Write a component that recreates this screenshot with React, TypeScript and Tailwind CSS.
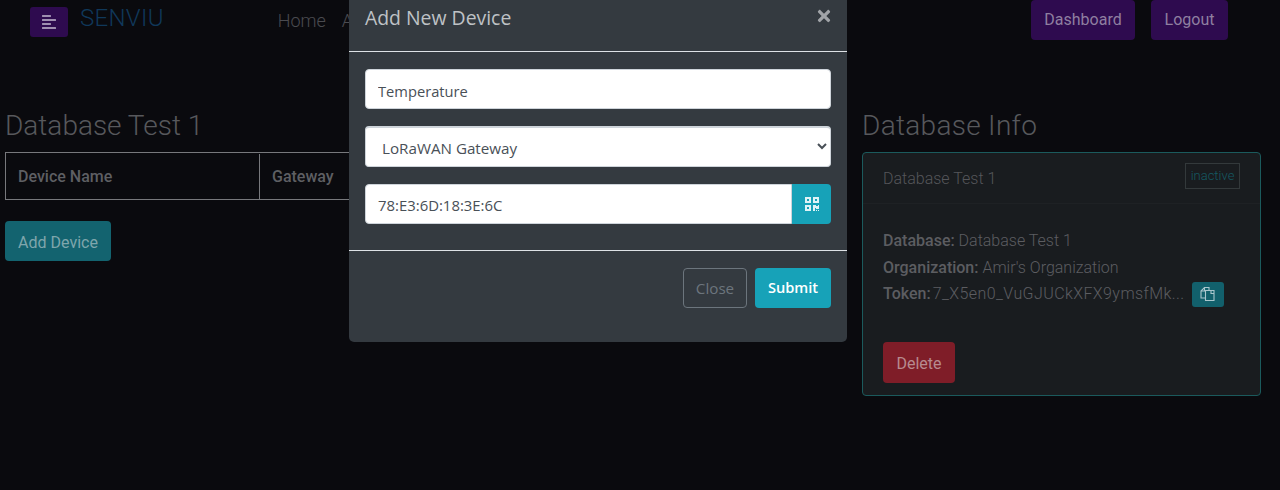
import React from "react";
import { FaAlignLeft, FaQrcode, FaTimes } from "react-icons/fa";

const rubik = "font-['Roboto',sans-serif]";
const segoe = "font-['Open_Sans','Noto_Sans',sans-serif]";

function CopyIcon() {
  return (
    <svg width="17" height="16" viewBox="0 0 16 16" fill="none" stroke="#a9c6cd" strokeWidth="1.1">
      <path d="M6 12H1.5V5L5 1.5H9.5V4.5" />
      <path d="M5 1.5V5H1.5" />
      <path d="M6 4.5H14.5V14.5H6Z" />
      <path d="M11.5 4.5V7.5H14.5" />
    </svg>
  );
}

export default function App() {
  return (
    <div className={`relative h-[490px] overflow-hidden bg-[#0a0a0e] ${rubik} font-light`}>
      <nav className="flex h-10 items-start">
        <button className="ml-[30px] mt-[7px] flex h-[30px] w-[38px] items-center justify-center rounded-[3px] bg-[#2e0b4f] text-[#9f8fb0]">
          <FaAlignLeft size={16} />
        </button>
        <span className="ml-3 text-[24px] leading-[36px] tracking-[0.3px] text-[#10385a]">SENVIU</span>
        <div className="ml-[114px] flex gap-4 pt-[7px] text-[18px] leading-[27px] text-[#4a4b50]">
          <span>Home</span>
          <span>About</span>
        </div>
        <div className="ml-auto mr-[52px] flex gap-4">
          <button className="h-10 w-[104px] rounded-[4px] bg-[#2e0b4f] text-[16px] font-normal text-[#8f7fa0]">Dashboard</button>
          <button className="h-10 w-[77px] rounded-[4px] bg-[#2e0b4f] text-[16px] font-normal text-[#8f7fa0]">Logout</button>
        </div>
      </nav>

      <main className="flex items-start pl-[5px] pt-[64px]">
        <section className="w-[450px] shrink-0">
          <h2 className="mb-[7px] pt-[2px] text-[28px] leading-[39px] text-[#57585c]">Database Test 1</h2>
          <div className="flex h-12 border border-[#77787c] pt-px text-[16px] font-medium text-[#5e5f63]">
            <div className="flex w-[254px] items-center border-r border-[#77787c] pl-3">Device Name</div>
            <div className="flex items-center pl-3">Gateway</div>
          </div>
          <button className="mt-[21px] h-10 w-[106px] rounded-[4px] bg-[#13636f] pt-[3px] text-[16px] font-normal text-[#7fa6ac]">Add Device</button>
        </section>

        <section className="ml-[407px] w-[399px] shrink-0">
          <h2 className="mb-[7px] pt-[2px] text-[28px] leading-[39px] tracking-[0.3px] text-[#57585c]">Database Info</h2>
          <div className="h-[244px] rounded-[4px] border border-[#1b5a5c] bg-[#191c1f]">
            <div className="flex h-[51px] items-start justify-between border-b border-[#1e2124] px-5">
              <span className="pt-[14px] text-[16px] leading-6 text-[#55565a]">Database Test 1</span>
              <span className="mt-[10px] w-[55px] border border-[#33393b] text-center text-[13px] leading-6 text-[#155a63]">inactive</span>
            </div>
            <div className="px-5 pt-[24px] text-[16px] leading-[26.5px] text-[#5c5d61]">
              <p><strong className="font-medium">Database:</strong> Database Test 1</p>
              <p><strong className="font-medium">Organization:</strong> Amir's Organization</p>
              <p className="flex items-center">
                <strong className="font-medium">Token:</strong>
                <span className="ml-[2px] tracking-[0.42px]">7_X5en0_VuGJUCkXFX9ymsfMk...</span>
                <button className="ml-[7px] flex h-[25px] w-8 items-center justify-center rounded-[3px] bg-[#12606c]">
                  <CopyIcon />
                </button>
              </p>
              <button className="mt-[34px] h-[41px] w-[72px] rounded-[4px] bg-[#7f1d28] pt-1 text-[16px] font-normal text-[#b78a8f]">Delete</button>
            </div>
          </div>
        </section>
      </main>

      <div className={`absolute left-[349px] top-0 h-[342px] w-[498px] rounded-b-[5px] bg-[#343a40] ${segoe} font-normal`}>
        <header className="flex h-[52px] justify-between border-b border-[#dee2e6] px-4">
          <h3 className="pt-[3px] text-[19.4px] leading-[30px] text-[#bfc2c6]">Add New Device</h3>
          <FaTimes className="mr-[-2px] mt-[7px] text-[#a1a4a8]" size={18} />
        </header>
        <div className="flex h-[199px] flex-col gap-[17px] border-b border-[#dee2e6] px-4 pt-[17px]">
          <input readOnly value="Temperature" className="h-10 w-full rounded-[4px] border border-[#ced4da] bg-white px-3 pt-1 text-[14.7px] text-[#495057] outline-none" />
          <select className="h-[41px] w-full rounded-[4px] border border-t-2 border-[#ced4da] bg-white px-3 pt-px text-[15.2px] text-[#495057] outline-none">
            <option>LoRaWAN Gateway</option>
          </select>
          <div className="flex h-10">
            <input readOnly value="78:E3:6D:18:3E:6C" className="min-w-0 flex-1 rounded-l-[4px] border border-[#ced4da] bg-white px-3 pt-[3px] text-[14.9px] text-[#495057] outline-none" />
            <button className="flex w-[39px] items-center justify-center rounded-r-[4px] bg-[#17a2b8] text-[#dff3f6]">
              <FaQrcode size={16} />
            </button>
          </div>
        </div>
        <footer className="flex justify-end gap-2 px-4 pt-[17px]">
          <button className="h-10 w-16 rounded-[4px] border border-[#6c757d] text-[15.2px] text-[#6c757d]">Close</button>
          <button className="h-10 w-[76px] rounded-[4px] bg-[#17a2b8] text-[14.6px] font-semibold text-white">Submit</button>
        </footer>
      </div>
    </div>
  );
}
